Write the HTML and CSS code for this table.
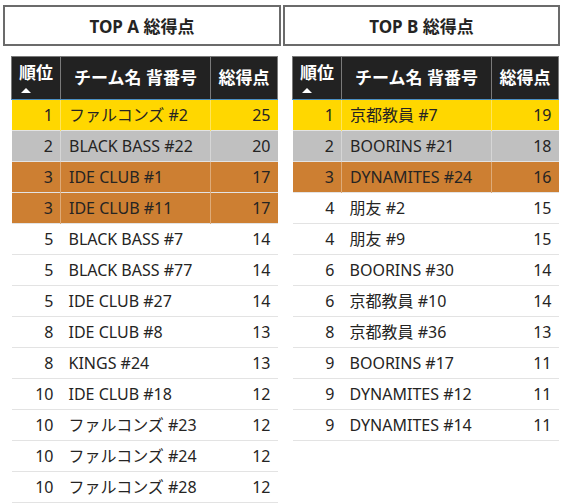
FILE: index.html
```html
<!DOCTYPE html>
<html lang="ja">
<head>
<meta charset="utf-8">
<link rel="stylesheet" href="styles.css">
</head>
<body>
<div class="board">
  <section class="panel panel-a">
    <div class="title">TOP A 総得点</div>
    <table class="rank">
      <colgroup><col class="c-rank"><col class="c-name"><col class="c-score"></colgroup>
      <thead>
        <tr><th class="h-rank"><span>順位</span><span class="tri"></span></th><th>チーム名 背番号</th><th>総得点</th></tr>
      </thead>
      <tbody>
        <tr class="gold"><td>1</td><td>ファルコンズ #2</td><td>25</td></tr>
        <tr class="silver"><td>2</td><td>BLACK BASS #22</td><td>20</td></tr>
        <tr class="bronze"><td>3</td><td>IDE CLUB #1</td><td>17</td></tr>
        <tr class="bronze"><td>3</td><td>IDE CLUB #11</td><td>17</td></tr>
        <tr><td>5</td><td>BLACK BASS #7</td><td>14</td></tr>
        <tr><td>5</td><td>BLACK BASS #77</td><td>14</td></tr>
        <tr><td>5</td><td>IDE CLUB #27</td><td>14</td></tr>
        <tr><td>8</td><td>IDE CLUB #8</td><td>13</td></tr>
        <tr><td>8</td><td>KINGS #24</td><td>13</td></tr>
        <tr><td>10</td><td>IDE CLUB #18</td><td>12</td></tr>
        <tr><td>10</td><td>ファルコンズ #23</td><td>12</td></tr>
        <tr><td>10</td><td>ファルコンズ #24</td><td>12</td></tr>
        <tr><td>10</td><td>ファルコンズ #28</td><td>12</td></tr>
      </tbody>
    </table>
  </section>
  <section class="panel panel-b">
    <div class="title">TOP B 総得点</div>
    <table class="rank">
      <colgroup><col class="c-rank"><col class="c-name"><col class="c-score"></colgroup>
      <thead>
        <tr><th class="h-rank"><span>順位</span><span class="tri"></span></th><th>チーム名 背番号</th><th>総得点</th></tr>
      </thead>
      <tbody>
        <tr class="gold"><td>1</td><td>京都教員 #7</td><td>19</td></tr>
        <tr class="silver"><td>2</td><td>BOORINS #21</td><td>18</td></tr>
        <tr class="bronze"><td>3</td><td>DYNAMITES #24</td><td>16</td></tr>
        <tr><td>4</td><td>朋友 #2</td><td>15</td></tr>
        <tr><td>4</td><td>朋友 #9</td><td>15</td></tr>
        <tr><td>6</td><td>BOORINS #30</td><td>14</td></tr>
        <tr><td>6</td><td>京都教員 #10</td><td>14</td></tr>
        <tr><td>8</td><td>京都教員 #36</td><td>13</td></tr>
        <tr><td>9</td><td>BOORINS #17</td><td>11</td></tr>
        <tr><td>9</td><td>DYNAMITES #12</td><td>11</td></tr>
        <tr><td>9</td><td>DYNAMITES #14</td><td>11</td></tr>
      </tbody>
    </table>
  </section>
</div>
</body>
</html>
```
FILE: styles.css
```css
html, body {
  margin: 0;
  padding: 0;
  background: #ffffff;
}
body {
  font-family: "Noto Sans", "Noto Sans CJK JP", sans-serif;
  color: #252423;
  overflow: hidden;
}
.board {
  display: flex;
  gap: 2px;
  padding: 5px 0 0 3px;
}
.panel {
  display: flex;
  flex-direction: column;
}
.panel-a { width: 278px; }
.panel-b { width: 277px; }
.title {
  box-sizing: border-box;
  height: 41px;
  border: 2px solid #6b6b6b;
  display: flex;
  align-items: center;
  justify-content: center;
  font-weight: 700;
  font-size: 17px;
  color: #252423;
}
.rank {
  margin-top: 10px;
  border-collapse: collapse;
  table-layout: fixed;
  width: 266px;
  font-size: 16px;
}
.panel-a .rank { margin-left: 8px; }
.panel-b .rank { margin-left: 9px; }
.c-rank { width: 49px; }
.c-name { width: 150px; }
.c-score { width: 67px; }
.rank thead tr {
  background: #222222;
  height: 43px;
}
.rank th {
  color: #ffffff;
  font-weight: 700;
  font-size: 17px;
  border: 1px solid #7a7a7a;
  border-bottom: 1px solid #4b8fc4;
  padding: 0;
  text-align: center;
  vertical-align: middle;
  line-height: 20px;
}
.rank th.h-rank {
  text-align: left;
  padding-left: 7px;
  vertical-align: top;
  padding-top: 6px;
}
.h-rank span { display: block; }
.tri {
  width: 0;
  height: 0;
  margin: 5px 0 0 2px;
  border-left: 5px solid transparent;
  border-right: 5px solid transparent;
  border-bottom: 5px solid #ffffff;
}
.rank tbody tr {
  height: 31px;
  border-bottom: 1px solid #e3e3e3;
}
.rank td {
  padding: 0 7px 0 7px;
  vertical-align: middle;
  white-space: nowrap;
  line-height: 20px;
}
.rank td:nth-child(1) { text-align: right; }
.rank td:nth-child(2) { text-align: left; padding-left: 8px; }
.rank td:nth-child(3) { text-align: right; }
.gold { background: #ffd700; }
.silver { background: #c0c0c0; }
.bronze { background: #cd7f32; }
.gold td, .silver td, .bronze td {
  border-right: 1px solid rgba(255, 255, 255, 0.35);
}
.gold td:last-child, .silver td:last-child, .bronze td:last-child {
  border-right: none;
}
```
